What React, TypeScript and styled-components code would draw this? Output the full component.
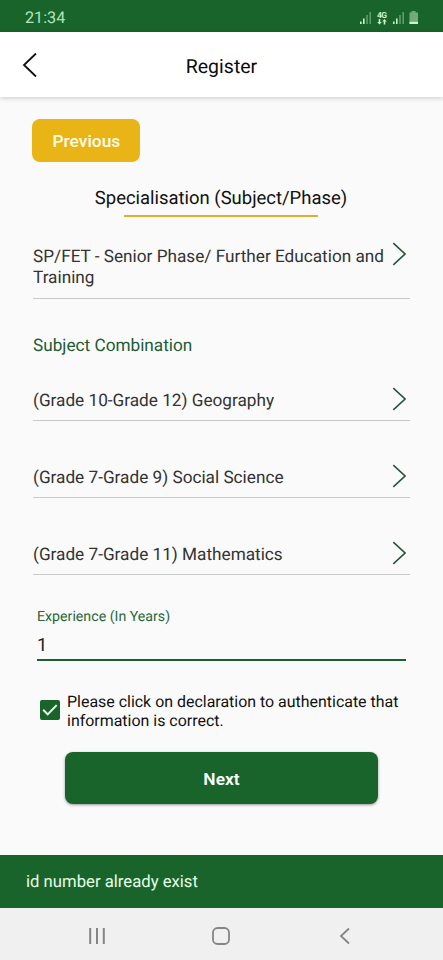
import React from "react";
import styled, { createGlobalStyle } from "styled-components";

const GREEN = "#19642b";
const GOLD = "#e9b415";

const GlobalStyle = createGlobalStyle`
  *, *::before, *::after { box-sizing: border-box; }
  body { margin: 0; background: #fafafa; }
  button, input { font: inherit; letter-spacing: inherit; }
`;

const Screen = styled.div`
  width: 443px;
  height: 960px;
  display: flex;
  flex-direction: column;
  overflow: hidden;
  background: #fafafa;
  font-family: Roboto, "Noto Sans", sans-serif;
  text-rendering: geometricPrecision;
  color: #111;
`;

const StatusBar = styled.div`
  flex: none;
  height: 32px;
  padding: 3px 23px 0 25px;
  display: flex;
  align-items: center;
  justify-content: space-between;
  background: ${GREEN};
`;

const Clock = styled.span`
  font-size: 16.2px;
  line-height: 19px;
  color: #b3e6b8;
`;

const Header = styled.header`
  flex: none;
  height: 65px;
  display: grid;
  grid-template-columns: 60px 1fr 60px;
  align-items: center;
  background: #fff;
  box-shadow: 0 1px 5px rgba(0, 0, 0, 0.2);
`;

const BackButton = styled.button`
  display: flex;
  padding: 0 0 0 22px;
  border: 0;
  background: none;
`;

const HeaderTitle = styled.h1`
  margin: 4px 0 0;
  text-align: center;
  font-size: 19.5px;
  font-weight: 400;
  line-height: 24px;
  color: #0c0c0c;
`;

const Form = styled.main`
  flex: 1;
  min-height: 0;
  padding: 22px 33px 0 32px;
  display: flex;
  flex-direction: column;
`;

const Button = styled.button<{ $kind: "previous" | "next" }>`
  flex: none;
  border: 0;
  padding: 1px 0 0;
  color: ${(p) => (p.$kind === "next" ? "#fff" : "#fffbe6")};
  font-size: 17.4px;
  font-weight: ${(p) => (p.$kind === "next" ? 600 : 500)};
  border-radius: 8px;
  background: ${(p) => (p.$kind === "next" ? GREEN : GOLD)};
  width: ${(p) => (p.$kind === "next" ? "313px" : "108px")};
  height: ${(p) => (p.$kind === "next" ? "52px" : "43px")};
  margin: ${(p) => (p.$kind === "next" ? "22px 0 0 33px" : "0 0 0 0.4px")};
  box-shadow: ${(p) => (p.$kind === "next" ? "0 1px 3px rgba(0,0,0,.4)" : "none")};
`;

const SectionTitle = styled.h2`
  margin: 24px 0 0;
  height: 31px;
  display: flex;
  flex-direction: column;
  align-items: center;
  justify-content: space-between;
  font-size: 18.45px;
  font-weight: 400;
  line-height: 24px;

  &::after {
    content: "";
    width: 194px;
    height: 2px;
    background: #deb02e;
  }
`;

const SelectRow = styled.div<{ $height: number; $twoLine?: boolean }>`
  flex: none;
  height: ${(p) => p.$height}px;
  margin-left: 1px;
  padding-bottom: ${(p) => (p.$twoLine ? 10 : 9)}px;
  display: flex;
  align-items: flex-end;
  justify-content: space-between;
  border-bottom: 1px solid #c9c9c9;
  color: #333;
  font-size: 17.2px;
  line-height: 20.5px;
  white-space: nowrap;
`;

const Chevron = styled.svg<{ $lift?: boolean }>`
  flex: none;
  width: 14px;
  height: 24px;
  margin: 0 4px ${(p) => (p.$lift ? 22 : 0.5)}px 0;
`;

const GroupLabel = styled.h3`
  margin: 35px 0 -1px 1px;
  font-size: 17.2px;
  font-weight: 400;
  line-height: 24px;
  color: #205c35;
`;

const Field = styled.label`
  margin: 33px 4px 0 5px;
  display: flex;
  flex-direction: column;
  border-bottom: 2px solid #205c35;
`;

const FieldLabel = styled.span`
  font-size: 14.2px;
  line-height: 18px;
  color: #26683a;
`;

const FieldInput = styled.input`
  height: 33px;
  margin: 0;
  padding: 4px 0 0;
  border: 0;
  outline: 0;
  background: none;
  font-size: 18.4px;
  color: #222;
`;

const Declaration = styled.div`
  margin: 32px 0 0 8px;
  display: flex;
  align-items: flex-start;
  gap: 7px;
  font-size: 15.95px;
  line-height: 18.5px;
`;

const CheckBox = styled.span`
  flex: none;
  width: 20px;
  height: 20px;
  margin-top: 7px;
  display: flex;
  border-radius: 2px;
  background: ${GREEN};
`;

const Toast = styled.div`
  flex: none;
  height: 53px;
  padding: 2px 26px 0;
  display: flex;
  align-items: center;
  background: ${GREEN};
  color: #e6ffe6;
  font-size: 16.7px;
`;

const NavBar = styled.nav`
  flex: none;
  height: 52px;
  padding: 3px 0 0 35px;
  display: grid;
  grid-template-columns: repeat(3, 124px);
  place-items: center;
  background: #f0f0f0;
  color: #858585;
`;

const Row = ({ children, height, twoLine }: { children: React.ReactNode; height: number; twoLine?: boolean }) => (
  <SelectRow $height={height} $twoLine={twoLine}>
    <span>{children}</span>
    <Chevron $lift={twoLine} viewBox="0 0 14 24" fill="none" stroke="#24583a" strokeWidth="1.6">
      <path d="M1.3 1.2 13 12 1.3 22.8" />
    </Chevron>
  </SelectRow>
);

const StatusIcons = () => (
  <svg width="60" height="16" viewBox="0 0 60 16" fill="#c9f2cd">
    {[0, 33].map((x) => (
      <g key={x} transform={`translate(${x} 0)`}>
        <rect x="0" y="11.5" width="1.6" height="2.5" />
        <rect x="3" y="8.5" width="1.6" height="5.5" />
        <rect x="6.3" y="5" width="1.4" height="9" opacity=".45" />
        <rect x="9.5" y="2" width="1.4" height="12" opacity=".45" />
      </g>
    ))}
    <text x="17" y="7.5" fontFamily="Roboto" fontWeight="700" fontSize="8.5" textLength="10">4G</text>
    <path d="M18.7 9v3h-1.5l2.3 2.6 2.3-2.6h-1.5V9zM23.7 14.6v-3h-1.5L24.5 9l2.3 2.6h-1.5v3z" />
    <path d="M49.5 2.5h2V1h4v1.5h2.5V14h-8.5z" opacity=".5" />
    <path d="M49.5 11.8h8.5V14h-8.5z" />
  </svg>
);

export default function App() {
  return (
    <Screen>
      <GlobalStyle />
      <StatusBar>
        <Clock>21:34</Clock>
        <StatusIcons />
      </StatusBar>
      <Header>
        <BackButton aria-label="Back">
          <svg width="16" height="26" viewBox="0 0 16 26" fill="none" stroke="#111" strokeWidth="1.8">
            <path d="M14 1.5 2 13l12 11.5" />
          </svg>
        </BackButton>
        <HeaderTitle>Register</HeaderTitle>
      </Header>
      <Form>
        <Button $kind="previous">Previous</Button>
        <SectionTitle>Specialisation (Subject/Phase)</SectionTitle>
        <Row height={82} twoLine>
          SP/FET - Senior Phase/ Further Education and
          <br />
          Training
        </Row>
        <GroupLabel>Subject Combination</GroupLabel>
        <Row height={64}>(Grade 10-Grade 12) Geography</Row>
        <Row height={77}>(Grade 7-Grade 9) Social Science</Row>
        <Row height={77}>(Grade 7-Grade 11) Mathematics</Row>
        <Field>
          <FieldLabel>Experience (In Years)</FieldLabel>
          <FieldInput defaultValue="1" />
        </Field>
        <Declaration>
          <CheckBox role="checkbox" aria-checked="true">
            <svg width="20" height="20" viewBox="0 0 20 20" fill="none" stroke="#e8ffe8" strokeWidth="2">
              <path d="m3.2 9.8 4.5 4.6 9-9.3" />
            </svg>
          </CheckBox>
          <span>
            Please click on declaration to authenticate that
            <br />
            information is correct.
          </span>
        </Declaration>
        <Button $kind="next">Next</Button>
      </Form>
      <Toast>id number already exist</Toast>
      <NavBar>
        <svg width="18" height="18" viewBox="0 0 18 18" stroke="currentColor" strokeWidth="2">
          <path d="M2.2 1v16M9 1v16M15.8 1v16" />
        </svg>
        <svg width="18" height="18" viewBox="0 0 18 18" fill="none" stroke="currentColor" strokeWidth="1.8">
          <rect x="1" y="1" width="16" height="16" rx="4.5" />
        </svg>
        <svg width="18" height="18" viewBox="0 0 18 18" fill="none" stroke="currentColor" strokeWidth="1.8">
          <path d="M13 1.5 5 9l8 7.5" />
        </svg>
      </NavBar>
    </Screen>
  );
}
